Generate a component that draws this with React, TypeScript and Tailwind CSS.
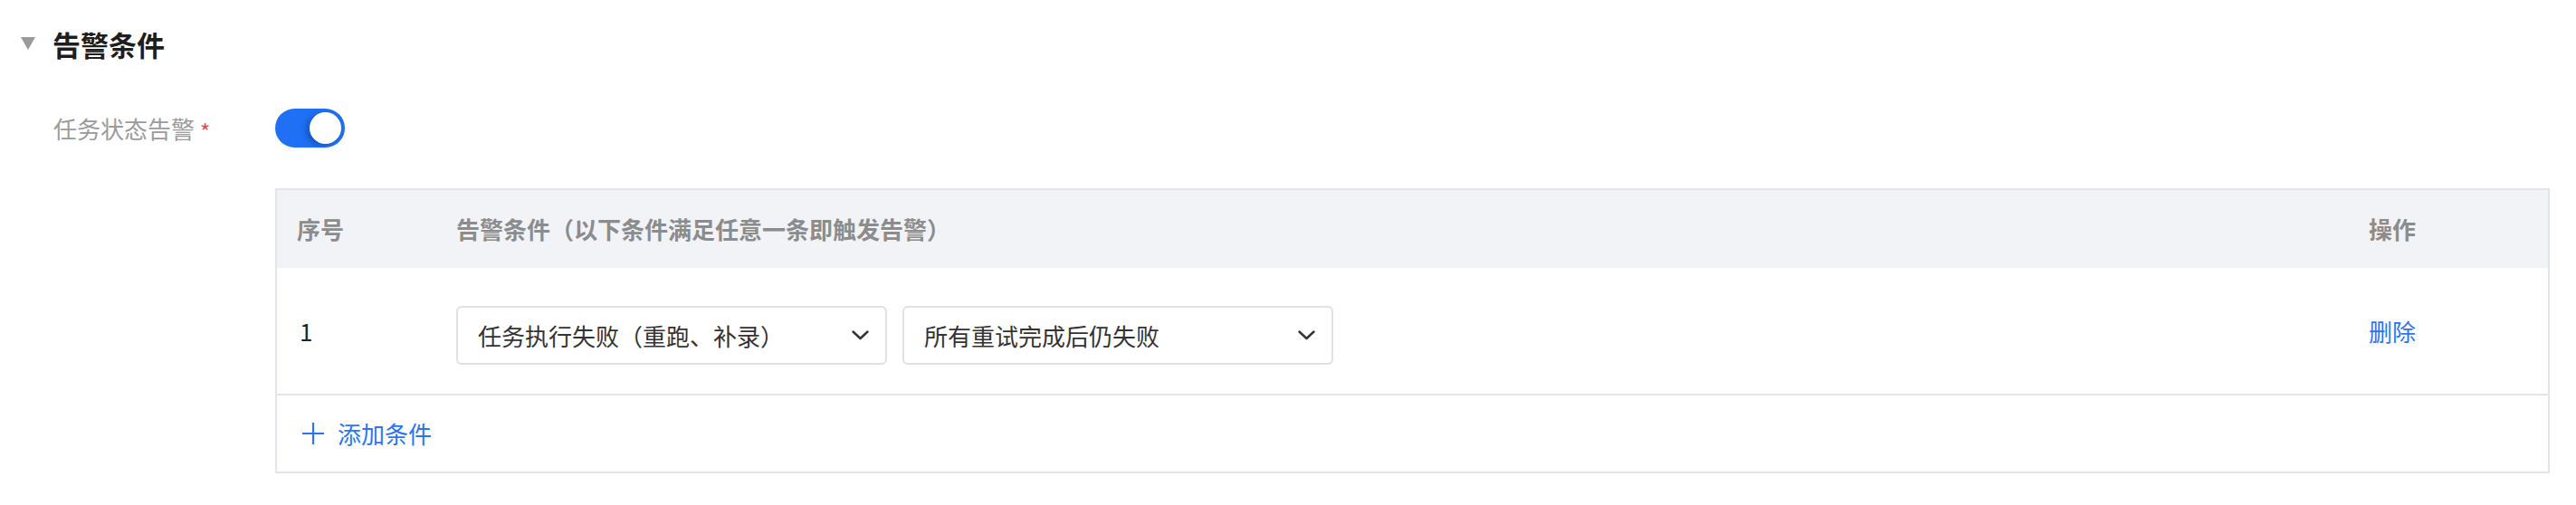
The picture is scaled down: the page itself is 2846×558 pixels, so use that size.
import React from "react";

const FONT = { fontFamily: '"Noto Sans CJK SC", "Noto Sans", sans-serif' };

function Chevron() {
  return (
    <svg width="19" height="11" viewBox="0 0 19 11" fill="none">
      <path d="M1.5 1.5 L9.5 9 L17.5 1.5" stroke="#333333" strokeWidth="2.4" strokeLinecap="round" strokeLinejoin="round" />
    </svg>
  );
}

function Select({ text }: { text: string }) {
  return (
    <div className="flex h-[65px] w-[476px] items-center justify-between rounded-[6px] border-2 border-[#dfe1e7] bg-white pl-[22px] pr-[18px]">
      <span className="text-[26px] leading-none text-[#333333]">{text}</span>
      <Chevron />
    </div>
  );
}

export default function App() {
  return (
    <div className="h-[558px] w-full bg-white" style={FONT}>
      {/* Title */}
      <div className="flex h-[96px] items-center">
        <div className="ml-[23px] h-0 w-0 border-x-[8.5px] border-t-[14px] border-x-transparent border-t-[#9a9a9a]" />
        <div className="ml-[19px] text-[31px] font-bold leading-none text-[#1e1e1e]">告警条件</div>
      </div>

      {/* Toggle row */}
      <div className="mt-[24px] flex h-[43px] items-center">
        <div className="flex w-[304px] items-center pl-[59px]">
          <span className="text-[26px] leading-none text-[#9b9b9b]">任务状态告警</span>
          <span className="ml-[6px] mt-[6px] text-[24px] leading-none text-[#e5484d]">*</span>
        </div>
        <div className="flex h-[43px] w-[77px] items-center justify-end rounded-full bg-[#1f70f5] pr-[4px]">
          <div className="h-[35px] w-[35px] rounded-full bg-white shadow-[-4px_2px_6px_rgba(10,50,140,0.45)]" />
        </div>
      </div>

      {/* Table */}
      <div className="ml-[304px] mt-[45px] w-[2513px] border-2 border-[#e4e5eb]">
        <div className="flex h-[86px] items-center bg-[#f2f3f7] text-[26px] font-bold leading-none text-[#8c8c8c]">
          <div className="w-[198px] pl-[22px]">序号</div>
          <div className="flex-1">告警条件（以下条件满足任意一条即触发告警）</div>
          <div className="w-[198px]">操作</div>
        </div>
        <div className="flex h-[141px] items-center border-b-2 border-[#e4e5eb]">
          <div className="w-[198px] pl-[25px] text-[26px] leading-none text-[#222222]">1</div>
          <div className="mt-[10px] flex flex-1 items-center gap-[17px]">
            <Select text="任务执行失败（重跑、补录）" />
            <Select text="所有重试完成后仍失败" />
          </div>
          <div className="w-[198px] text-[26px] leading-none text-[#2b74f5]">删除</div>
        </div>
        <div className="flex h-[84px] items-center pl-[27px]">
          <svg width="26" height="26" viewBox="0 0 26 26" fill="none">
            <path d="M13 1 V25 M1 13 H25" stroke="#2b74f5" strokeWidth="2.2" />
          </svg>
          <span className="ml-[14px] text-[26px] leading-none text-[#2b74f5]">添加条件</span>
        </div>
      </div>
    </div>
  );
}
